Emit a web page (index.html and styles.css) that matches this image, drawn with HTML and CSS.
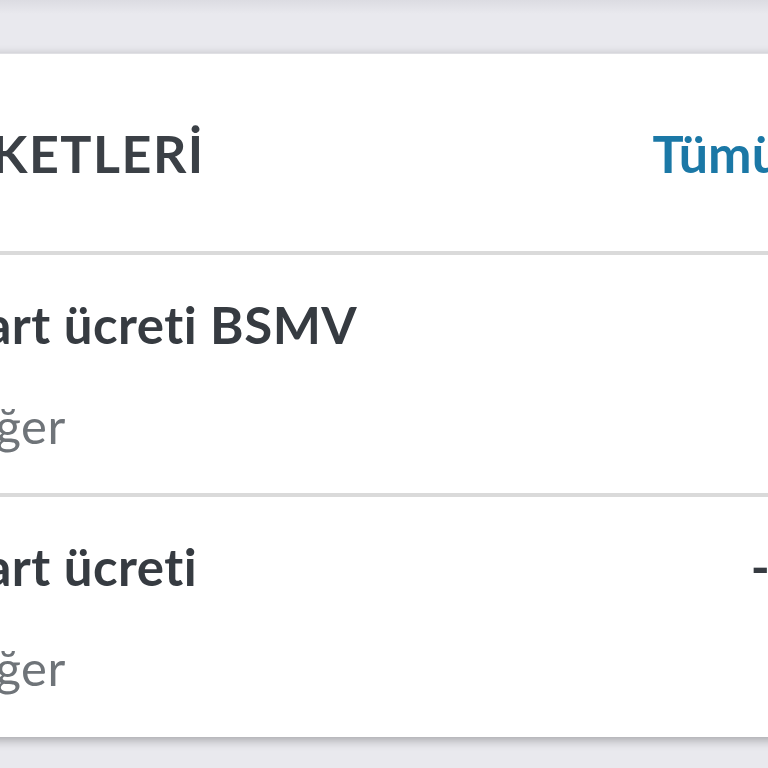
FILE: index.html
```html
<!DOCTYPE html>
<html lang="tr">
<head>
  <meta charset="UTF-8">
  <title>Hesap Hareketleri</title>
  <link rel="stylesheet" href="styles.css">
</head>
<body>
  <div class="page">
    <div class="card">
      <!-- başlık -->
      <div class="card-head">
        <h2 class="title">SON HAREKETLERİ</h2>
        <a class="all" href="#">Tümü</a>
      </div>

      <!-- hareketler -->
      <div class="row">
        <div class="info">
          <div class="name">Kart ücreti BSMV</div>
          <div class="cat">Diğer</div>
        </div>
        <div class="amount">-1,25 TL</div>
      </div>
      <div class="row">
        <div class="info">
          <div class="name">Kart ücreti</div>
          <div class="cat">Diğer</div>
        </div>
        <div class="amount">-25,00 TL</div>
      </div>
    </div>
  </div>
</body>
</html>
```

FILE: styles.css
```css
html, body { margin: 0; height: 100%; }
body { background: #e9e9ee; overflow: hidden; font-family: Lato, "Noto Sans", sans-serif; }
.page { padding-top: 53px; background: linear-gradient(#dcdce2, #e9e9ee 14px); }
.card { background: #fff; margin-left: -50px; width: 1100px; border-top: 1px solid #e0e0e4; box-shadow: 0 3px 10px rgba(0, 0, 0, 0.3); }
.card-head { height: 197px; display: flex; align-items: center; justify-content: space-between; padding-right: 269px; border-bottom: 4px solid #dadada; }
.title { margin: 0 0 0 -233px; font-size: 52px; font-weight: 700; color: #3b4046; letter-spacing: 1.5px; }
.all { color: #1b78a6; font-size: 52px; font-weight: 700; text-decoration: none; margin-left: auto; }
.row { height: 242px; display: flex; justify-content: space-between; align-items: flex-start; border-bottom: 4px solid #dadada; box-sizing: border-box; padding: 40px 82px 0 0; }
.row:last-child { border-bottom: 0; height: 240px; }
.info { display: flex; flex-direction: column; }
.name { font-size: 51px; font-weight: 700; color: #363b41; line-height: 60px; letter-spacing: 0.5px; }
.cat { font-size: 49px; color: #6f7479; line-height: 60px; margin-top: 40px; margin-left: -4px; letter-spacing: 0.5px; }
.amount { font-size: 51px; font-weight: 700; color: #363b41; line-height: 60px; }
```
